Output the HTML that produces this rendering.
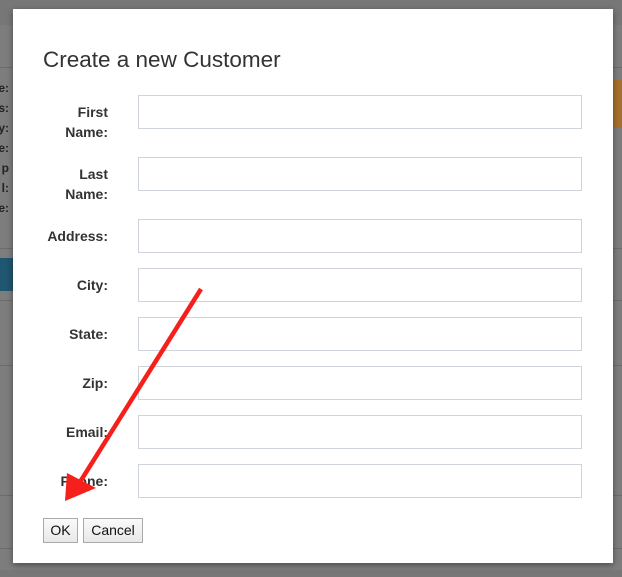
<!DOCTYPE html>
<html><head><style>
body{margin:0;width:622px;height:577px;background:#777;position:relative;overflow:hidden;font-family:"Liberation Sans",Arial,sans-serif}
.bgp{position:absolute;left:0;top:25px;width:622px;height:545px;background:#7d7d7d}
.ln{position:absolute;left:0;width:622px;height:1px;background:#6c6c6c}
.modal{position:absolute;left:13px;top:9px;width:600px;height:554px;background:#fff;box-shadow:0 2px 6px rgba(0,0,0,.4)}
h1{position:absolute;left:30px;top:38px;margin:0;font-size:22.5px;font-weight:normal;color:#333;font-family:"Liberation Sans",sans-serif}
.lab{position:absolute;right:505px;width:90px;text-align:right;font-size:14px;font-weight:bold;color:#333;line-height:20px}
.inp{position:absolute;left:125px;width:442px;height:32px;border:1px solid #cfd3dc}
.btn{position:absolute;top:509px;height:23px;border:1px solid #aaa;background:linear-gradient(#fafafa,#e8e8e8);font-size:14px;line-height:23px;text-align:center;color:#111}
.lt{position:absolute;font-size:12px;font-weight:bold;color:#222;right:613px;line-height:20px;text-align:right}
</style></head><body>
<div class="bgp"></div>
<div class="ln" style="top:67px"></div><div class="ln" style="top:248px"></div><div class="ln" style="top:300px"></div><div class="ln" style="top:365px"></div><div class="ln" style="top:495px"></div><div class="ln" style="top:548px"></div>
<div class="lt" style="top:78px">e:<br>s:<br>y:<br>e:<br>p<br>l:<br>e:</div>
<div style="position:absolute;left:0;top:258px;width:13px;height:33px;background:#1f5670"></div>
<div style="position:absolute;left:613px;top:80px;width:9px;height:48px;background:#a5702a"></div>
<div class="modal">
<h1>Create a new Customer</h1>
<div class="lab" style="top:93px">First<br>Name:</div><div class="inp" style="top:86px"></div>
<div class="lab" style="top:155px">Last<br>Name:</div><div class="inp" style="top:148px"></div>
<div class="lab" style="top:217px">Address:</div><div class="inp" style="top:210px"></div>
<div class="lab" style="top:266px">City:</div><div class="inp" style="top:259px"></div>
<div class="lab" style="top:315px">State:</div><div class="inp" style="top:308px"></div>
<div class="lab" style="top:364px">Zip:</div><div class="inp" style="top:357px"></div>
<div class="lab" style="top:413px">Email:</div><div class="inp" style="top:406px"></div>
<div class="lab" style="top:462px">Phone:</div><div class="inp" style="top:455px"></div>
<div class="btn" style="left:30px;width:33px">OK</div>
<div class="btn" style="left:70px;width:58px">Cancel</div>
</div>
<svg style="position:absolute;left:0;top:0" width="622" height="577">
<line x1="201" y1="289" x2="80" y2="482" stroke="#f5201c" stroke-width="4.5"/>
<polygon points="65,501 67,473 96,488" fill="#f5201c"/>
</svg>
</body></html>
